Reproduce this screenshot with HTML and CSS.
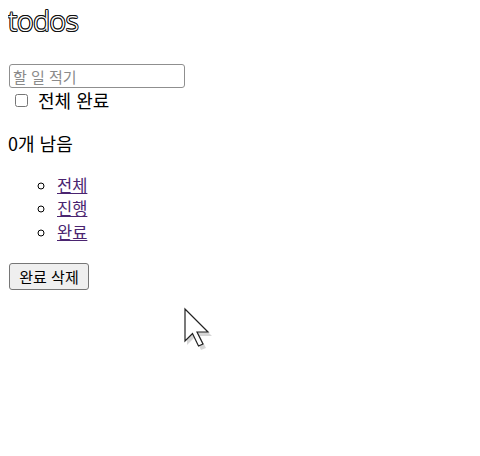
FILE: index.html
```html
<!DOCTYPE html>
<html lang="ko">
<head>
<meta charset="utf-8">
<title>todos</title>
<link rel="stylesheet" href="styles.css">
</head>
<body>
<h1 class="title">todos</h1>
<form class="new-todo">
  <input class="new-input" type="text" placeholder="할 일 적기">
</form>
<label class="toggle-all"><input class="toggle-box" type="checkbox"><span>전체 완료</span></label>
<p class="count">0개 남음</p>
<ul class="filters">
  <li><a href="#/">전체</a></li>
  <li><a href="#/active">진행</a></li>
  <li><a href="#/completed">완료</a></li>
</ul>
<button class="clear" type="button">완료 삭제</button>
<svg class="cursor" width="32" height="44" viewBox="0 0 32 44">
  <path d="M3 4 L3 37 L11 29 L17 42 L22 40 L16 28 L28 28 Z" fill="rgba(0,0,0,0.16)" transform="translate(2,2)"/>
  <path d="M3 3 L3 35 L10.5 27.5 L16.5 40 L21 38 L15 26 L26 26 Z" fill="#fff" stroke="#222" stroke-width="1.2" stroke-linejoin="miter"/>
</svg>
</body>
</html>
```
FILE: styles.css
```css
html, body {
  background: #fff;
}
body {
  margin: 8px;
  font-family: "Noto Sans CJK KR", "Noto Sans", sans-serif;
  font-size: 18px;
  line-height: 22.5px;
  color: #000;
  position: relative;
  min-height: 440px;
}
.title {
  margin: 0;
  font-family: "Open Sans", "Noto Sans", sans-serif;
  font-weight: 300;
  font-size: 28px;
  line-height: 25px;
  letter-spacing: -0.3px;
  color: #fff;
  text-shadow: 1px 0 0 #111, -1px 0 0 #111, 0 1px 0 #111, 0 -1px 0 #111,
    0.7px 0.7px 0 #111, -0.7px 0.7px 0 #111, 0.7px -0.7px 0 #111, -0.7px -0.7px 0 #111;
}
.new-todo {
  margin: 31px 0 0 1px;
}
.new-input {
  display: block;
  box-sizing: border-box;
  width: 176px;
  height: 24px;
  margin: 0;
  padding: 0 3px;
  border: 1px solid #8f8f8f;
  border-radius: 3px;
  font-family: "Noto Sans CJK KR", sans-serif;
  font-size: 15px;
  line-height: 20px;
}
.new-input::placeholder {
  color: #8a8a8a;
}
.toggle-all {
  display: flex;
  align-items: center;
  height: 24px;
}
.toggle-box {
  margin: 0 10px 0 7px;
  width: 13px;
  height: 13px;
}
.count {
  margin: 20px 0 0 0;
}
.filters {
  margin: 19.6px 0 0 0;
  padding-left: 49px;
  list-style: circle;
  font-size: 16.5px;
  line-height: 23.3px;
}
.filters a {
  color: #4a2470;
}
.clear {
  display: block;
  margin: 18.7px 0 0 1px;
  box-sizing: border-box;
  width: 80px;
  height: 27px;
  padding: 0;
  border: 1px solid #767676;
  border-radius: 3px;
  background: #efefef;
  font-family: "Noto Sans CJK KR", sans-serif;
  font-size: 15px;
  line-height: 25px;
  color: #000;
}
.cursor {
  position: absolute;
  left: 174px;
  top: 298px;
}
```
